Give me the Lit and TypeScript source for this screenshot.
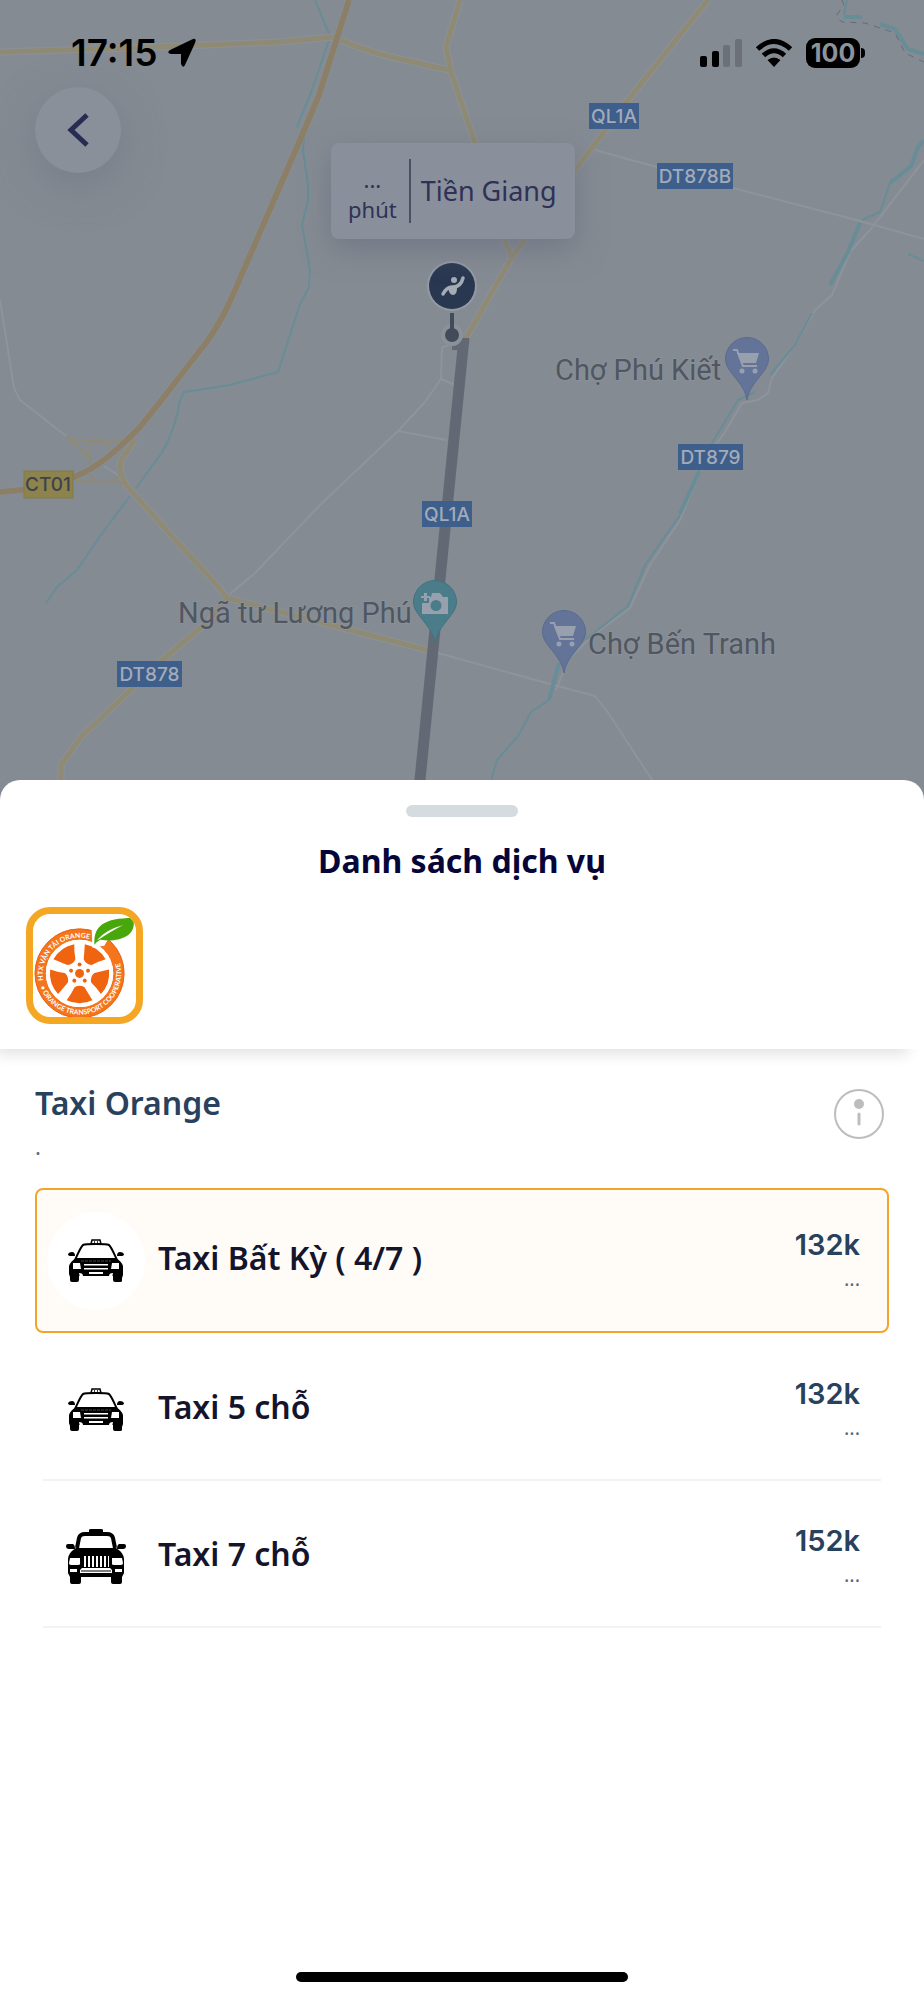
import { LitElement, html, svg, css } from "lit";
import { customElement, property, state } from "lit/decorators.js";
import { classMap } from "lit/directives/class-map.js";

interface Service {
  id: string;
  name: string;
  price: string;
  car: "sedan" | "suv";
}

const SERVICES: Service[] = [
  { id: "any", name: "Taxi Bất Kỳ ( 4/7 )", price: "132k", car: "sedan" },
  { id: "five", name: "Taxi 5 chỗ", price: "132k", car: "sedan" },
  { id: "seven", name: "Taxi 7 chỗ", price: "152k", car: "suv" },
];

const SHIELDS = [
  { x: 589, y: 103, w: 50, text: "QL1A" },
  { x: 657, y: 163, w: 76, text: "DT878B" },
  { x: 678, y: 444, w: 65, text: "DT879" },
  { x: 422, y: 501, w: 50, text: "QL1A" },
  { x: 117, y: 661, w: 65, text: "DT878" },
];

const PIN = "M0 41C-2 30-7 25-13 17C-18 11-21.500 6-21.500 0A21.500 21.500 0 0 1 21.500 0C21.500 6 18 11 13 17C7 25 2 30 0 41Z";

/* Road map drawn behind the sheet */
@customElement("route-map")
export class RouteMap extends LitElement {
  static styles = css`
    :host { display: block; }
    .map { display: block; width: 100%; height: 100%; background: #858b93; }
    .line { fill: none; stroke-linejoin: round; }
    .minor { stroke: #8e949d; stroke-width: 2; }
    .water { stroke: #688d96; stroke-width: 2; }
    .wide { stroke-width: 4; }
    .casing { stroke: #8c9199; stroke-width: 7; }
    .road { stroke: #8f8a73; stroke-width: 5; }
    .ramp { stroke: #8f8a76; stroke-width: 2; }
    .motorway { stroke: #8c7f68; stroke-width: 6; }
    .border { stroke: #656c78; stroke-width: 1; stroke-dasharray: 6 6; }
    .route { stroke: #636974; stroke-width: 11; }
    .shield { fill: #3e5e8b; }
    .toll { fill: #8c834d; stroke: #827a48; }
    .code { font: 500 19px Inter, sans-serif; fill: #a3abb8; text-anchor: middle; }
    .dark { fill: #3f424d; }
    .place { font: 400 29px Roboto, sans-serif; fill: #505761; stroke: #8a9098; stroke-width: 2; paint-order: stroke; }
    .shop { fill: #637498; stroke: #596b92; }
    .photo { fill: #4a7c8a; stroke: #427381; }
    .glyph { fill: #98a0ad; }
    .trolley { fill: none; stroke: #98a0ad; stroke-width: 2; }
  `;

  private trolley(x: number, y: number) {
    return svg`<g transform="translate(${x} ${y})">
      <path class="shop" d=${PIN}></path>
      <path class="trolley" d="M-14-9H-10L-4 7H10"></path>
      <path class="glyph" d="M-10-6H12L9 4H-6Z"></path>
      <circle class="glyph" cx="-5" cy="12" r="2.500"></circle><circle class="glyph" cx="8" cy="12" r="2.500"></circle>
    </g>`;
  }

  render() {
    const roads = [
      "M0 52L130 48L280 42L334 37",
      "M341 40Q372 54 410 61Q432 67 450 70",
      "M460 0L446 47L451 72L475 143L504 239L512 257",
      "M708 0L628 100L573 173L512 257L466 338",
      "M135 440L121 460L120 472L126 485L180 545L215 583L227 598Q320 622 427 650",
      "M227 598L212 618L160 662L80 738L61 765V800",
    ];
    return html`<svg class="map" viewBox="0 0 924 800" preserveAspectRatio="xMidYMin slice" role="img" aria-label="Bản đồ tuyến đường">
      <path class="line minor" d="M595 150L733 188L860 221L924 239M924 160L870 230L850 252L832 295L815 310L795 345L772 378L768 393L758 400L742 403L725 432L704 462L680 520L650 565L630 608L590 638L568 660L556 690M438 653L550 684L595 696L607 711L660 792M0 300L14 388L20 400L66 436M230 594L255 573L320 505L398 431L425 402L441 379L442 347L455 343M441 379L455 385M398 431L447 440M104 466L118 475"></path>
      <path class="line water" d="M315 0L329 34M329 40L312 90L297 127M304 137L303 150L308 185V200L302 225L310 270L309 287L300 304L278 372L230 385L184 392L180 400Q174 435 160 455L136 488M130 496L100 536L77 570L57 587L46 603M847 0L844 15M908 254L924 261M890 183L880 212L862 220M812 313L795 345L770 375M755 392L738 400L712 443L700 470L680 515L645 565L628 606L585 640M549 700L531 712L518 736L497 760L490 784"></path>
      <path class="line water wide" d="M844 17L862 17M880 24L895 29L908 49L924 54M924 140L918 147L911 166L890 183M860 223L848 252L830 285M699 472L680 513M559 663L549 700"></path>
      <path class="line border" d="M842 0L844 5L836 16L842 22L865 23L895 33L905 53L924 62"></path>
      ${roads.map((d) => svg`<path class="line casing" d=${d}></path>`)}
      ${roads.map((d) => svg`<path class="line road" d=${d}></path>`)}
      <path class="line ramp" d="M68 437L74 440H124M68 437L91 460L90 464M88 455V445L95 441L108 444L110 450M75 480L92 483L116 481L124 484M90 474L94 483M117 476V480"></path>
      <path class="line casing" d="M349 0L319 95L300 140L235 290Q220 325 205 344L160 402L140 427Q112 456 92 468Q60 488 0 492"></path>
      <path class="line motorway" d="M349 0L319 95L300 140L235 290Q220 325 205 344L160 402L140 427Q112 456 92 468Q60 488 0 492"></path>
      <path class="line route" d="M464 338L418 800"></path>
      <path d="M452 346Q459 346 462 338H469L466 358L457 358L458 350H452Z" fill="#636974"></path>
      ${SHIELDS.map((s) => svg`<rect class="shield" x=${s.x} y=${s.y} width=${s.w} height="26"></rect><text class="code" x=${s.x + s.w / 2} y=${s.y + 20}>${s.text}</text>`)}
      <rect class="toll" x="24" y="471" width="49" height="27"></rect><text class="code dark" x="48" y="491">CT01</text>
      <text class="place" x="555" y="380">Chợ Phú Kiết</text>
      <text class="place" x="178" y="623">Ngã tư Lương Phú</text>
      <text class="place" x="588" y="654">Chợ Bến Tranh</text>
      ${this.trolley(747, 359)} ${this.trolley(564, 632)}
      <g transform="translate(435 602)">
        <path class="photo" d=${PIN}></path>
        <path class="glyph" fill-rule="evenodd" d="M-13 1H-6V-5H-4L-3-9H5L8-5H13V12H-13ZM1-2A5.500 5.500 0 1 0 1 9A5.500 5.500 0 1 0 1-2Z"></path>
        <path class="glyph" d="M-11-9H-8V-6H-5V-4H-8V-1H-11V-4H-14V-6H-11Z"></path>
      </g>
      <g>
        <circle cx="452" cy="286" r="25" fill="#949aa4"></circle><circle cx="452" cy="286" r="23" fill="#293850"></circle>
        <circle cx="454" cy="280" r="3" fill="#a5abb5"></circle>
        <path d="M443 294Q447 286 454 287Q461 286 463 278" fill="none" stroke="#a5abb5" stroke-width="3.500" stroke-linecap="round"></path>
        <path d="M448 287Q455 284 457 288Q457 295 453 295Q449 295 448 287Z" fill="#a5abb5"></path>
        <circle cx="452" cy="335" r="11" fill="#8b9199"></circle>
        <path d="M452 313V335" stroke="#424b59" stroke-width="4"></path><circle cx="452" cy="335" r="7" fill="#424b59"></circle>
      </g>
    </svg>`;
  }
}

/* Front view of a taxi, in two body styles */
@customElement("car-icon")
export class CarIcon extends LitElement {
  @property() kind: "sedan" | "suv" = "sedan";

  static styles = css`
    :host { display: block; }
    .car { display: block; width: 60px; height: 60px; }
  `;

  render() {
    return html`<svg class="car" viewBox="0 0 60 60" aria-hidden="true">${this.kind === "sedan"
      ? svg`
        <path d="M25 13L26 9H34L35 13Z" fill="#fff" stroke="#000" stroke-width="1.500"></path>
        <path d="M28 11h1M31 11h1M27 13h1M30 13h1M33 13h1" stroke="#000" stroke-width="1.500"></path>
        <path d="M9 29C12 23 14 17 17 14Q19 13 30 13Q41 13 43 14C46 17 48 23 51 29" fill="#fff" stroke="#000" stroke-width="2"></path>
        <path d="M2 23Q3 21 6 21Q9 21 9 25L5 25Q2 25 2 23ZM58 23Q57 21 54 21Q51 21 51 25L55 25Q58 25 58 23Z"></path>
        <path d="M10 27H50Q56 31 57 35V44L56 47V50Q56 51 54 51H49Q47 51 47 49V45H13V49Q13 51 11 51H6Q4 51 4 49V46L3 43V35Q4 31 10 27Z"></path>
        <path d="M7 32H14L15 38H7ZM53 32H46L45 38H53ZM18 33H42V34.500H18ZM18 37H42V38.500H18ZM23 41H37V43H23Z" fill="#fff"></path>
        <path d="M15 30H45" stroke="#777" stroke-width=".6" stroke-dasharray="3 1"></path>
        <path d="M13 42Q17 42 17 45L14 47M47 42Q43 42 43 45L46 47" fill="#fff"></path>`
      : svg`
        <path d="M23 6V3Q23 2 25 2H35Q37 2 37 3V6Z"></path>
        <path d="M11 21L13 11Q14 7 19 7H41Q46 7 47 11L49 21" fill="#fff" stroke="#000" stroke-width="4"></path>
        <path d="M0 19Q0 17 2 17H7Q9 18 9 22H3Q0 22 0 19ZM60 19Q60 17 58 17H53Q51 18 51 22H57Q60 22 60 19Z"></path>
        <path d="M10 21H50Q58 26 58 32V46L56 50V55Q56 57 54 57H47Q45 57 45 55V50H15V55Q15 57 13 57H6Q4 57 4 55V50L2 46V32Q2 26 10 21Z"></path>
        <path d="M4 31H14V37Q14 38 12 38H5Q3 38 3 36ZM56 31H46V37Q46 38 48 38H55Q57 38 57 36ZM4 42H11V45H4ZM56 42H49V45H56ZM16 41H44L46 43V46H14V43ZM18 29H20V40H18ZM22 29H24V40H22ZM26 29H28V40H26ZM30 29H32V40H30ZM34 29H36V40H34ZM38 29H40V40H38ZM42 29H43V40H42Z" fill="#fff"></path>
        <path d="M15 44H45" stroke="#000" stroke-width="1"></path>`}</svg>`;
  }
}

/* Cooperative emblem: an orange wheel rim with a leaf */
@customElement("orange-logo")
export class OrangeLogo extends LitElement {
  static styles = css`
    :host { display: block; }
    .logo { display: block; width: 100%; height: 100%; }
    .ring { font: 700 7px Lato, sans-serif; fill: #fff; }
  `;

  render() {
    return html`<svg class="logo" viewBox="0 0 104 104" role="img" aria-label="HTX Vận Tải Orange">
      <defs>
        <path id="top" d="M10.400 67A37 37 0 0 1 71 33"></path>
        <path id="side" d="M7.500 73.500A42 42 0 1 0 73 26.500"></path>
      </defs>
      <circle cx="47" cy="60" r="39.500" fill="none" stroke="#f4751c" stroke-width="11"></circle>
      <circle cx="47" cy="60" r="45" fill="none" stroke="#ee620f" stroke-width="1"></circle>
      <circle cx="47" cy="60" r="34" fill="#fff"></circle>
      ${[0, 72, 144, 216, 288].map((a) => svg`<g transform="rotate(${a} 47 60)">
        <path d="M42 74Q47 71 52 74L60 87Q47 93 34 87Q38 82 42 74Z" fill="#f0640f"></path>
        <circle cx="47" cy="51" r="2" fill="#f0640f"></circle>
      </g>`)}
      <circle cx="47" cy="60" r="4.500" fill="#f0640f"></circle>
      <path d="M59 10L60 34L72 32L85 10Z" fill="#fff"></path>
      <text class="ring"><textPath href="#top">HTX VẬN TẢI ORANGE</textPath></text>
      <text class="ring"><textPath href="#side">• ORANGE TRANSPORT COOPERATIVE</textPath></text>
      <path d="M62 31C61 13 70 4 101 4C106 22 87 29 68 26Q64 28 62 31Z" fill="#48a70b"></path>
      <path d="M65 26Q73 16 91 11Q76 19 66 26Z" fill="#fff"></path>
    </svg>`;
  }
}

@customElement("app-root")
export class AppRoot extends LitElement {
  @state() private selected = "any";

  static styles = css`
    :host {
      display: flex;
      flex-direction: column;
      min-height: 100vh;
      background: #fff;
      font-family: "Noto Sans", sans-serif;
      color: #14142b;
    }
    * { box-sizing: border-box; }
    h1, h2, p { margin: 0; }
    button { border: 0; padding: 0; font: inherit; cursor: pointer; }
    .stage { position: relative; height: 800px; overflow: hidden; }
    .backdrop { position: absolute; inset: 0; }
    .overlay { position: relative; display: flex; flex-direction: column; align-items: flex-start; }
    .status {
      display: flex; align-items: center; align-self: stretch;
      height: 87px; padding: 18px 59px 0 71px;
      font: 600 37px/40px Inter, sans-serif; color: #000;
    }
    .arrow { width: 30px; height: 30px; margin-left: 10px; }
    .signals { display: flex; align-items: center; gap: 13px; margin-left: auto; }
    .bars { width: 42px; height: 28px; }
    .wifi { width: 38px; height: 28px; }
    .battery { display: flex; align-items: center; gap: 1px; }
    .level {
      width: 54px; height: 30px; border-radius: 9px; background: #000;
      font-size: 25px; font-weight: 700; line-height: 30px; text-align: center; color: #8d939c;
    }
    .tip { width: 4px; height: 10px; border-radius: 0 5px 5px 0; background: #000; }
    .back {
      display: grid; place-items: center; width: 86px; height: 86px; margin-left: 35px;
      border-radius: 50%; background: #89909a; box-shadow: 0 12px 40px #6b708080;
    }
    .chevron { width: 30px; height: 40px; }
    .callout {
      position: absolute; top: 143px; left: calc(50% - 131px);
      display: flex; align-items: center; height: 96px; padding: 0 18px 0 17px;
      border-radius: 8px; background: #89909b; color: #2f3156;
      box-shadow: 0 10px 30px #666b7c99; font-size: 27px; line-height: 36px; white-space: nowrap;
    }
    .eta { display: grid; justify-items: center; padding: 6px 12px 0 0; font-size: 22px; line-height: 30px; }
    .town { display: flex; align-items: center; height: 64px; padding-left: 10px; border-left: 2px solid #4b5160; }
    .sheet {
      position: relative; display: flex; flex-direction: column; flex: 1;
      margin-top: -20px; border-radius: 20px 20px 0 0; background: #fff;
    }
    .head { padding: 25px 26px; box-shadow: -10px 12px 14px -6px #0000001c; border-radius: 20px 20px 0 0; }
    .grip { width: 112px; height: 12px; margin: 0 auto; border-radius: 6px; background: #d4dce0; }
    .title { padding-top: 22px; font-size: 32px; line-height: 44px; font-weight: 700; text-align: center; color: #05053a; }
    .brand {
      display: block; width: 117px; height: 117px; margin-top: 24px; padding: 0;
      border: 7px solid #f5a623; border-radius: 24px; background: #fff; overflow: hidden;
    }
    .body { padding: 32px 35px 0; }
    .company { display: flex; justify-content: space-between; padding-right: 4px; }
    .name { font-size: 32px; line-height: 44px; font-weight: 600; color: #28415d; }
    .note { padding-top: 6px; font-size: 22px; line-height: 30px; color: #5a6b7e; }
    .info { width: 52px; height: 52px; margin-top: 7px; background: none; }
    .glyph { display: block; width: 52px; height: 52px; }
    .list { margin: 0; padding: 27px 0 0; border: 0; min-width: 0; }
    .row {
      position: relative; display: flex; align-items: center; height: 147px;
      padding: 0 27px 0 10px; border: 2px solid transparent; cursor: pointer;
    }
    .row::after { content: ""; position: absolute; left: 6px; right: 6px; bottom: 0; height: 2px; background: #f3f3f3; }
    .row.on { height: 145px; margin-bottom: 3px; border-color: #f3a52b; border-radius: 8px; background: #fffcf7; }
    .row.on::after { content: none; }
    .radio { position: absolute; opacity: 0; pointer-events: none; }
    .disc { display: grid; place-items: center; width: 98px; height: 98px; border-radius: 50%; background: #fff; }
    .label { flex: 1; padding: 0 0 5px 13px; font-size: 32px; line-height: 44px; font-weight: 600; }
    .cost { display: grid; justify-items: end; color: #28415d; }
    .price { font: 600 29px/36px Inter, sans-serif; }
    .wait { height: 32px; font-size: 20px; line-height: 32px; color: #5a6b7e; }
    .home { width: 36%; height: 10px; margin: auto auto 18px; border-radius: 5px; background: #000; }
  `;

  render() {
    return html`
      <section class="stage">
        <route-map class="backdrop"></route-map>
        <div class="overlay">
          <div class="status">
            <span>17:15</span>
            <svg class="arrow" viewBox="0 0 30 30" aria-hidden="true"><path d="M26 1Q30 0 28 5L18 27Q16 31 14 26V16H4Q-1 15 3 12Z"></path></svg>
            <div class="signals">
              <svg class="bars" viewBox="0 0 42 28" aria-hidden="true">
                <rect y="17" width="7" height="11" rx="2"></rect><rect x="12" y="12" width="7" height="16" rx="2"></rect>
                <rect x="23" y="6" width="7" height="22" rx="2" fill="#6b7079"></rect><rect x="35" y="0" width="7" height="28" rx="2" fill="#6b7079"></rect>
              </svg>
              <svg class="wifi" viewBox="0 0 38 28" aria-hidden="true">
                <path d="M2.500 10Q19-5 35.500 10M8.500 16.500Q19 7 29.500 16.500" fill="none" stroke="#000" stroke-width="5"></path>
                <path d="M19 28L12.500 21Q19 16 25.500 21Z"></path>
              </svg>
              <div class="battery"><span class="level">100</span><span class="tip"></span></div>
            </div>
          </div>
          <button class="back" aria-label="Quay lại">
            <svg class="chevron" viewBox="0 0 30 40" aria-hidden="true"><path d="M24 5L8 20L24 35" fill="none" stroke="#272c52" stroke-width="5"></path></svg>
          </button>
        </div>
        <div class="callout">
          <div class="eta"><span>...</span><span>phút</span></div>
          <div class="town">Tiền Giang</div>
        </div>
      </section>

      <main class="sheet">
        <header class="head">
          <div class="grip"></div>
          <h1 class="title">Danh sách dịch vụ</h1>
          <button class="brand" aria-label="Taxi Orange"><orange-logo></orange-logo></button>
        </header>
        <section class="body">
          <div class="company">
            <div>
              <h2 class="name">Taxi Orange</h2>
              <p class="note">.</p>
            </div>
            <button class="info" aria-label="Thông tin">
              <svg class="glyph" viewBox="0 0 52 52" aria-hidden="true">
                <circle cx="26" cy="26" r="24" fill="none" stroke="#bdbdbd" stroke-width="2"></circle>
                <circle cx="26" cy="16" r="5" fill="#bdbdbd"></circle>
                <path d="M26 26V36" stroke="#bdbdbd" stroke-width="3" stroke-linecap="round"></path>
              </svg>
            </button>
          </div>
          <fieldset class="list" aria-label="Danh sách dịch vụ">
            ${SERVICES.map((s) => html`<label class=${classMap({ row: true, on: s.id === this.selected })}>
              <input class="radio" type="radio" name="service" .checked=${s.id === this.selected} @change=${() => (this.selected = s.id)} />
              <span class="disc"><car-icon .kind=${s.car}></car-icon></span>
              <span class="label">${s.name}</span>
              <span class="cost"><span class="price">${s.price}</span><span class="wait">...</span></span>
            </label>`)}
          </fieldset>
        </section>
        <div class="home"></div>
      </main>
    `;
  }
}
